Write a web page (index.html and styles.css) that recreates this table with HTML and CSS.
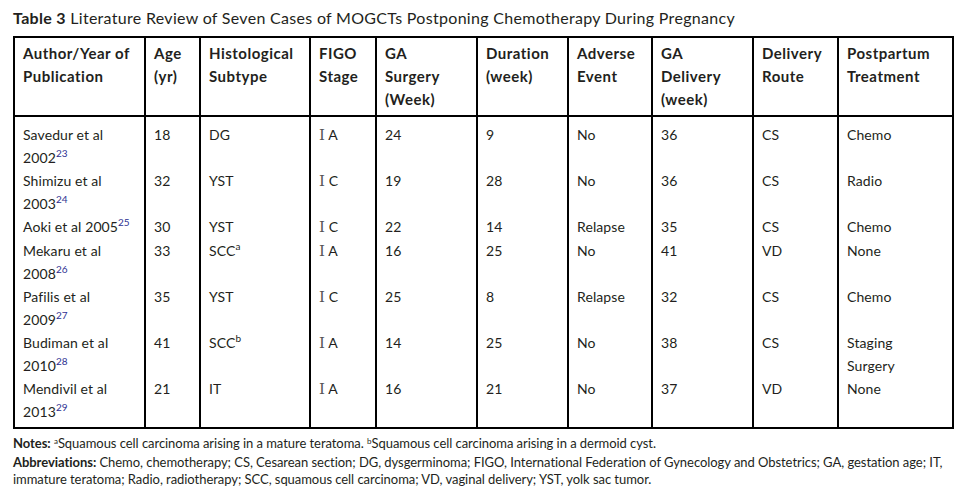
FILE: index.html
```html
<!DOCTYPE html>
<html lang="en">
<head>
<meta charset="utf-8">
<title>Table 3</title>
<link rel="stylesheet" href="styles.css">
</head>
<body>
<h1 class="caption"><b>Table 3</b> Literature Review of Seven Cases of MOGCTs Postponing Chemotherapy During Pregnancy</h1>
<table class="review">
  <colgroup>
    <col class="c1"><col class="c2"><col class="c3"><col class="c4"><col class="c5">
    <col class="c6"><col class="c7"><col class="c8"><col class="c9"><col class="c10">
  </colgroup>
  <thead>
    <tr>
      <th>Author/Year of Publication</th>
      <th>Age (yr)</th>
      <th>Histological Subtype</th>
      <th>FIGO Stage</th>
      <th>GA<br>Surgery<br>(Week)</th>
      <th>Duration (week)</th>
      <th>Adverse Event</th>
      <th>GA<br>Delivery<br>(week)</th>
      <th>Delivery Route</th>
      <th>Postpartum Treatment</th>
    </tr>
  </thead>
  <tbody>
    <tr>
      <td>Savedur et al 2002<sup class="ref">23</sup></td><td>18</td><td>DG</td><td><span class="roman">Ⅰ</span> A</td><td>24</td><td>9</td><td>No</td><td>36</td><td>CS</td><td>Chemo</td>
    </tr>
    <tr>
      <td>Shimizu et al 2003<sup class="ref">24</sup></td><td>32</td><td>YST</td><td><span class="roman">Ⅰ</span> C</td><td>19</td><td>28</td><td>No</td><td>36</td><td>CS</td><td>Radio</td>
    </tr>
    <tr>
      <td class="nowrap">Aoki et al 2005<sup class="ref">25</sup></td><td>30</td><td>YST</td><td><span class="roman">Ⅰ</span> C</td><td>22</td><td>14</td><td>Relapse</td><td>35</td><td>CS</td><td>Chemo</td>
    </tr>
    <tr>
      <td>Mekaru et al 2008<sup class="ref">26</sup></td><td>33</td><td>SCC<sup class="fn">a</sup></td><td><span class="roman">Ⅰ</span> A</td><td>16</td><td>25</td><td>No</td><td>41</td><td>VD</td><td>None</td>
    </tr>
    <tr>
      <td>Pafilis et al 2009<sup class="ref">27</sup></td><td>35</td><td>YST</td><td><span class="roman">Ⅰ</span> C</td><td>25</td><td>8</td><td>Relapse</td><td>32</td><td>CS</td><td>Chemo</td>
    </tr>
    <tr>
      <td>Budiman et al 2010<sup class="ref">28</sup></td><td>41</td><td>SCC<sup class="fn">b</sup></td><td><span class="roman">Ⅰ</span> A</td><td>14</td><td>25</td><td>No</td><td>38</td><td>CS</td><td>Staging<br>Surgery</td>
    </tr>
    <tr>
      <td>Mendivil et al 2013<sup class="ref">29</sup></td><td>21</td><td>IT</td><td><span class="roman">Ⅰ</span> A</td><td>16</td><td>21</td><td>No</td><td>37</td><td>VD</td><td>None</td>
    </tr>
  </tbody>
</table>
<p class="note"><b>Notes:</b> <sup class="fn">a</sup>Squamous cell carcinoma arising in a mature teratoma. <sup class="fn">b</sup>Squamous cell carcinoma arising in a dermoid cyst.</p>
<p class="note abbr"><b>Abbreviations:</b> Chemo, chemotherapy; CS, Cesarean section; DG, dysgerminoma; FIGO, International Federation of Gynecology and Obstetrics; GA, gestation age; IT,<br>immature teratoma; Radio, radiotherapy; SCC, squamous cell carcinoma; VD, vaginal delivery; YST, yolk sac tumor.</p>
</body>
</html>
```

FILE: styles.css
```css
html, body {
  background: #ffffff;
}
body {
  margin: 0;
  padding: 8px 13px 0 13px;
  font-family: "Lato", "Open Sans", sans-serif;
  color: #231f20;
}
.caption {
  margin: 0 0 8px 0;
  font-size: 16px;
  font-weight: normal;
  line-height: 20px;
  letter-spacing: 0.3px;
}
.caption b {
  font-weight: bold;
}
.review {
  width: 939px;
  border-collapse: collapse;
  table-layout: fixed;
  font-size: 14px;
  line-height: 23px;
}
.c1 { width: 131px; }
.c2 { width: 55px; }
.c3 { width: 110px; }
.c4 { width: 66px; }
.c5 { width: 101px; }
.c6 { width: 91px; }
.c7 { width: 84px; }
.c8 { width: 101px; }
.c9 { width: 85px; }
.c10 { width: 115px; }
.review th,
.review td {
  border-left: 2px solid #000;
  border-right: 2px solid #000;
  text-align: left;
  vertical-align: top;
  padding: 0 6px 0 8px;
}
.review td {
  letter-spacing: 0.1px;
}
.review th {
  font-weight: bold;
  font-size: 15px;
  letter-spacing: 0.5px;
  border-top: 2px solid #000;
  border-bottom: 2px solid #000;
  padding-top: 4px;
  padding-bottom: 4px;
}
.review tbody tr:first-child td {
  padding-top: 6px;
}
.review tbody tr:last-child td {
  padding-bottom: 4px;
  border-bottom: 2px solid #000;
}
.nowrap {
  white-space: nowrap;
}
sup {
  line-height: 0;
  font-size: 10px;
  vertical-align: 6px;
  letter-spacing: 0;
}
.ref {
  color: #2e3192;
}
.roman {
  font-family: "Liberation Serif", "DejaVu Serif", serif;
  font-size: 15px;
  color: #555;
}
.note {
  margin: 5px 0 0 0;
  font-size: 13px;
  line-height: 18px;
  letter-spacing: -0.05px;
}
.abbr {
  margin-top: 2px;
  line-height: 17px;
}
.note sup {
  font-size: 8px;
  vertical-align: 4px;
}
```
